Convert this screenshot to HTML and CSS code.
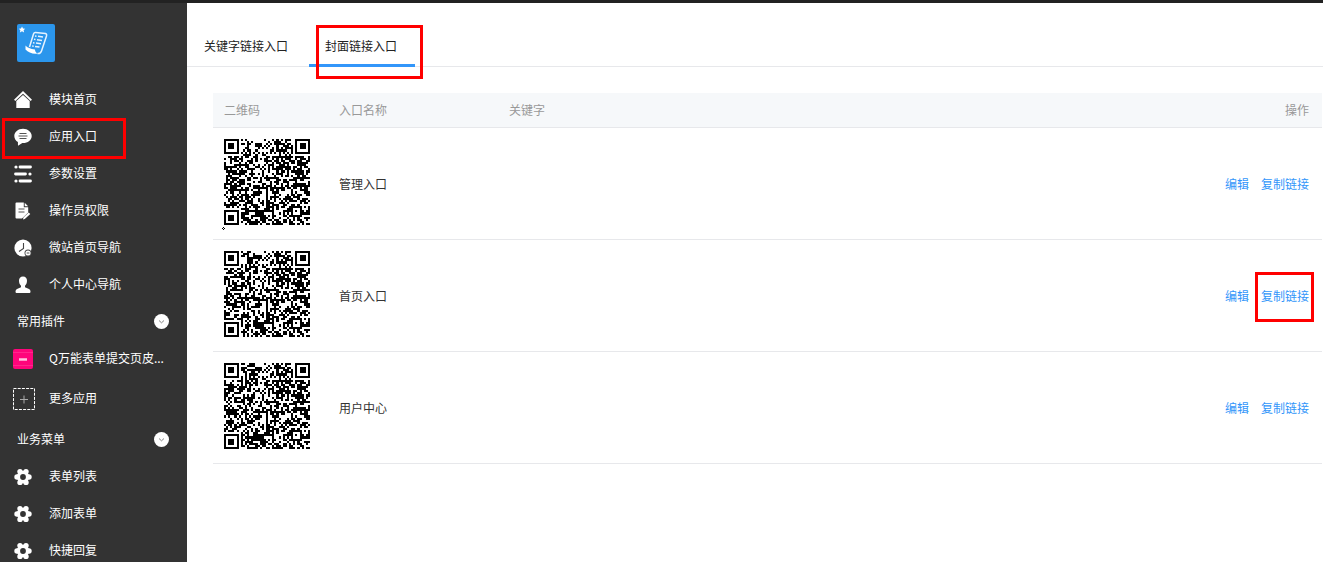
FILE: index.html
```html
<!DOCTYPE html>
<html lang="zh-CN">
<head>
<meta charset="utf-8">
<title>应用入口</title>
<link rel="stylesheet" href="styles.css">
</head>
<body>
<svg class="defs" aria-hidden="true">
  <symbol id="gear" viewBox="0 0 18 18"><circle cx="9" cy="9" r="6.200"/><circle cx="3" cy="9" r="2.700"/><circle cx="15" cy="9" r="2.700"/><circle cx="6" cy="3.600" r="2.700"/><circle cx="12" cy="3.600" r="2.700"/><circle cx="6" cy="14.400" r="2.700"/><circle cx="12" cy="14.400" r="2.700"/><circle cx="9" cy="9" r="2.900" fill="#333"/></symbol>
  <symbol id="chevron" viewBox="0 0 15 15"><circle cx="7.500" cy="7.500" r="7.500" fill="#fff"/><path d="M5 6.500l2.500 2.300L10 6.500" fill="none" stroke="#777" stroke-width=".9"/></symbol>
</svg>
<header class="topbar"></header>
<div class="layout">
  <aside class="sidebar">
    <a class="logo" href="#" aria-label="模块">
      <svg viewBox="0 0 38 38"><rect width="38" height="38" rx="2" fill="#2b96ec"/><path d="M5 2.500l1 2 2.200.2-1.600 1.500.5 2.200L5 7.300l-2.100 1.100.5-2.200L1.800 4.700 4 4.500z" fill="#fff"/><path d="M12.500 23L16.500 10Q17 8.500 18.500 8.600L28.500 9.500Q30 10 29.500 12L24.500 27Q23.500 30 20.500 29.500" fill="none" stroke="#e6f3ff" stroke-width="1.500"/><path d="M8.500 21.500Q11 24.500 18 25.500Q18 28.500 21 29.500Q13 30.500 8.500 25.500Z" fill="#fff"/><path d="M18 12l1.500.2M21 12.300l5 .7M17 15.300l1.500.2M20 15.700l5 .7M16 18.700l1.500.2M19 19.100l5 .7M15.200 22l1.500.2M18 22.400l4.500.7" stroke="#e6f3ff" stroke-width="1.500"/></svg>
    </a>
    <nav class="menu">
      <a class="item" href="#"><svg class="icon" viewBox="0 0 18 18"><path d="M9 0L18 8.700l-1.300 1.200L9 2.800 1.300 9.900 0 8.700z"/><path d="M9 4l6.700 6.100V17H2.300v-6.900z"/></svg>模块首页</a>
      <a class="item marked" href="#"><svg class="icon" viewBox="0 0 18 18"><path d="M9 .7C4 .7.300 4 .3 8c0 2.600 1.400 4.800 3.600 6L4 17.700l4.300-2.600C13.600 15.400 17.700 12 17.700 8S13.800.7 9 .7z"/><path d="M5.500 5.500h7M4.500 8h9M5.500 10.500h7" stroke="#555"/></svg>应用入口</a>
      <a class="item" href="#"><svg class="icon" viewBox="0 0 18 18"><path d="M6 2h10.500M1.500 9h10M6 16h10.500" stroke="#fff" stroke-width="2.800" stroke-linecap="round"/><circle cx="2" cy="2" r="1.600"/><circle cx="16" cy="9" r="1.600"/><circle cx="2" cy="16" r="1.600"/></svg>参数设置</a>
      <a class="item" href="#"><svg class="icon" viewBox="0 0 18 18"><path d="M2.500.5h7.300v4.700h4.400v5.300L8 16.500H2.500Q1.500 16.500 1.500 15.500V1.500Q1.500.5 2.500.5z"/><path d="M10.700.8l3.400 3.500h-3.400zM14.600 10.500l1.700 1.500-5.500 5-1.800.5.400-2z"/><path d="M4.500 7h6M4.500 10h6" stroke="#555"/></svg>操作员权限</a>
      <a class="item" href="#"><svg class="icon" viewBox="0 0 18 18"><circle cx="9" cy="9" r="8.600"/><path d="M9.500 4v5.500L5 12.500" fill="none" stroke="#444" stroke-width="1.100"/><circle cx="14" cy="14" r="3.500" fill="#444"/><circle cx="14" cy="14" r="2.600"/><path d="M12.700 14h2.700" stroke="#555"/></svg>微站首页导航</a>
      <a class="item" href="#"><svg class="icon" viewBox="0 0 18 18"><path d="M9 .5c-2.600 0-4 1.700-4 4.200 0 2.300.8 4 2 5v1.500L3 13q-1.500.8-1.500 2.500c0 1 .5 1.500 1.500 1.500h12c1 0 1.500-.5 1.500-1.500Q16.500 13.800 15 13l-4-1.800V9.700c1.200-1 2-2.700 2-5C13 2.200 11.600.5 9 .5z"/></svg>个人中心导航</a>
      <button class="section" type="button">常用插件<svg class="chevron"><use href="#chevron"/></svg></button>
      <a class="item" href="#"><svg class="icon plugin" viewBox="0 0 20 20"><rect width="20" height="20" rx="2" fill="#ff057b"/><path d="M0 3.500h20M0 16.500h20" stroke="#ff4a9e" stroke-width=".5"/><path d="M6 10.500h8" stroke="#ffc4df" stroke-width="2.500"/></svg>Q万能表单提交页皮...</a>
      <a class="item more" href="#"><svg class="icon add" viewBox="0 0 22 22"><rect x=".5" y=".5" width="21" height="21" fill="none" stroke="#fff" stroke-dasharray="3 1.200"/><path d="M11 7.500v8M7 11.500h8" stroke="#aaa"/></svg>更多应用</a>
      <button class="section" type="button">业务菜单<svg class="chevron"><use href="#chevron"/></svg></button>
      <a class="item" href="#"><svg class="icon"><use href="#gear"/></svg>表单列表</a>
      <a class="item" href="#"><svg class="icon"><use href="#gear"/></svg>添加表单</a>
      <a class="item" href="#"><svg class="icon"><use href="#gear"/></svg>快捷回复</a>
    </nav>
  </aside>
  <main class="content">
    <nav class="tabs">
      <a class="tab" href="#">关键字链接入口</a>
      <a class="tab active" href="#" aria-current="page">封面链接入口</a>
    </nav>
    <table class="entries">
      <thead>
        <tr><th class="col-code">二维码</th><th class="col-name">入口名称</th><th>关键字</th><th class="col-ops">操作</th></tr>
      </thead>
      <tbody>
        <tr><td><div class="code"><svg class="qr" data-seed="3" role="img" aria-label="二维码"></svg><svg class="speck" viewBox="0 0 3 3"><path d="M1 0h1v1H1zM0 1h1v1H0zM2 1h1v1H2zM1 2h1v1H1z"/></svg></div></td><td>管理入口</td><td></td><td class="ops"><a href="#">编辑</a><a href="#">复制链接</a></td></tr>
        <tr><td><div class="code"><svg class="qr" data-seed="7" role="img" aria-label="二维码"></svg></div></td><td>首页入口</td><td></td><td class="ops"><a href="#">编辑</a><a class="marked" href="#">复制链接</a></td></tr>
        <tr><td><div class="code"><svg class="qr" data-seed="9" role="img" aria-label="二维码"></svg></div></td><td>用户中心</td><td></td><td class="ops"><a href="#">编辑</a><a href="#">复制链接</a></td></tr>
      </tbody>
    </table>
  </main>
</div>
<script src="qr.js"></script>
</body>
</html>
```
FILE: styles.css
```css
* { box-sizing: border-box; }
body {
  margin: 0;
  height: 100vh;
  display: flex;
  flex-direction: column;
  overflow: hidden;
  background: #fff;
  color: #333;
  font: 12px/18px "Noto Sans CJK SC", sans-serif;
}
a { color: inherit; text-decoration: none; }
button { margin: 0; border: 0; background: none; font: inherit; color: inherit; cursor: pointer; }
.defs { position: absolute; width: 0; height: 0; }
.topbar { flex: none; height: 3px; background: #222; }
.layout { flex: 1; display: flex; min-height: 0; }

.sidebar { flex: none; width: 187px; padding-top: 21px; overflow: hidden; background: #333; color: #fff; }
.logo { display: block; width: 38px; height: 38px; margin: 0 0 18px 17px; }
.logo svg { display: block; }
.menu { display: flex; flex-direction: column; }
.item { display: grid; grid-template-columns: 22px 1fr; column-gap: 14px; align-items: center; flex: none; height: 37px; padding: 0 8px 0 13px; white-space: nowrap; }
.icon { width: 18px; height: 18px; margin: 2px 0 0 1px; fill: #fff; }
.plugin { width: 20px; height: 20px; margin-left: 0; }
.add { width: 22px; height: 22px; margin-left: 0; }
.more { height: 44px; }
.section { display: flex; flex: none; justify-content: space-between; align-items: center; height: 36px; margin-top: 1px; padding: 0 18px 0 17px; }
.chevron { width: 15px; height: 15px; }

.marked { position: relative; }
.marked::after { content: ""; position: absolute; border: 3px solid #f00; pointer-events: none; }
.item.marked::after { inset: 1px 61px -5px 2px; }
.tab.active::after { content: ""; position: absolute; inset: 22px -8px -15px 7px; border: 3px solid #f00; pointer-events: none; }
.ops .marked::after { inset: -15px -5px -17px -6px; }

.content { flex: 1; min-width: 0; }
.tabs { display: flex; gap: 3px; height: 64px; padding-left: 1px; border-bottom: 1px solid #e7e8eb; }
.tab { position: relative; height: 64px; padding: 34px 18px 0 16px; color: #222; }
.active { border-bottom: 3px solid #3296fa; }

.entries { width: calc(100% - 27px); margin: 26px 1px 0 26px; border-collapse: separate; border-spacing: 0; table-layout: fixed; }
.entries th, .entries td { padding: 0 13px 0 11px; text-align: left; border-bottom: 1px solid #e7e8eb; }
.entries th { height: 35px; font-weight: 400; color: #999; background: #f6f8fa; }
.entries td { height: 112px; }
.col-code { width: 115px; }
.col-name { width: 170px; }
.col-ops { width: 200px; }
.entries .col-ops, .entries .ops { text-align: right; }
.ops a { display: inline-block; color: #3296fa; }
.ops a + a { margin-left: 12px; }
.code { position: relative; height: 90px; }
.qr { display: block; width: 86px; height: 86px; }
.speck { position: absolute; left: -2px; bottom: -1px; width: 3px; height: 3px; }
```
FILE: qr.js
```js
// Draws a version 6 code (41 x 41 modules) into each .qr element.
const SIZE = 41;

function finder(x, y, ox, oy) {
  const d = Math.max(Math.abs(x - ox - 3), Math.abs(y - oy - 3));
  return d > 4 ? null : d !== 2 && d !== 4;
}

function moduleAt(x, y, noise) {
  for (const [ox, oy] of [[0, 0], [SIZE - 7, 0], [0, SIZE - 7]]) {
    const f = finder(x, y, ox, oy);
    if (f !== null) return f;
  }
  const a = Math.max(Math.abs(x - 34), Math.abs(y - 34));
  if (a <= 2) return a !== 1;
  if (x === 6) return y % 2 === 0;
  if (y === 6) return x % 2 === 0;
  return noise;
}

document.querySelectorAll(".qr").forEach((svg) => {
  const random = (seed) => () => {
    seed = (seed * 1664525 + 1013904223) >>> 0;
    return seed / 4294967296;
  };
  const shared = random(41);
  const own = random(Number(svg.dataset.seed));
  let d = "";
  for (let y = 0; y < SIZE; y++) {
    for (let x = 0; x < SIZE; x++) {
      const s = shared() < 0.54;
      const o = own() < 0.54;
      if (moduleAt(x, y, x > 14 ? s : o)) d += `M${x} ${y}h1v1h-1z`;
    }
  }
  svg.setAttribute("viewBox", `0 0 ${SIZE} ${SIZE}`);
  svg.setAttribute("shape-rendering", "crispEdges");
  svg.innerHTML = `<path d="${d}"/>`;
});
```
